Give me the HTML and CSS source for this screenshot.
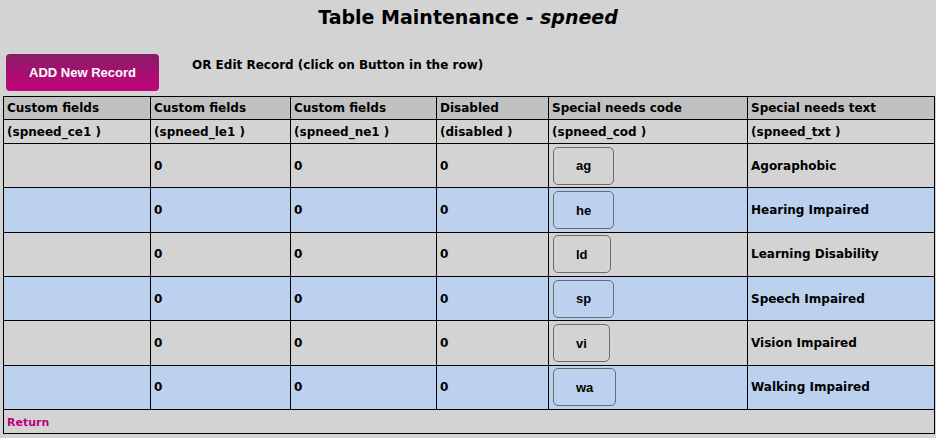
FILE: index.html
```html
<!DOCTYPE html>
<html>
<head>
<meta charset="utf-8">
<title>Table Maintenance - spneed</title>
<link rel="stylesheet" href="styles.css">
</head>
<body>
<h1 class="title">Table Maintenance - <i>spneed</i></h1>
<div class="toolbar">
  <button class="add-btn">ADD New Record</button>
  <span class="hint">OR Edit Record (click on Button in the row)</span>
</div>
<table class="grid">
  <colgroup>
    <col class="c1"><col class="c2"><col class="c3"><col class="c4"><col class="c5"><col class="c6">
  </colgroup>
  <thead>
    <tr class="head">
      <th>Custom fields</th><th>Custom fields</th><th>Custom fields</th><th>Disabled</th><th>Special needs code</th><th>Special needs text</th>
    </tr>
    <tr class="sub">
      <th>(spneed_ce1 )</th><th>(spneed_le1 )</th><th>(spneed_ne1 )</th><th>(disabled )</th><th>(spneed_cod )</th><th>(spneed_txt )</th>
    </tr>
  </thead>
  <tbody>
    <tr class="row odd"><td></td><td>0</td><td>0</td><td>0</td><td><button class="code-btn">ag</button></td><td>Agoraphobic</td></tr>
    <tr class="row even"><td></td><td>0</td><td>0</td><td>0</td><td><button class="code-btn">he</button></td><td>Hearing Impaired</td></tr>
    <tr class="row odd"><td></td><td>0</td><td>0</td><td>0</td><td><button class="code-btn">ld</button></td><td>Learning Disability</td></tr>
    <tr class="row even"><td></td><td>0</td><td>0</td><td>0</td><td><button class="code-btn">sp</button></td><td>Speech Impaired</td></tr>
    <tr class="row odd"><td></td><td>0</td><td>0</td><td>0</td><td><button class="code-btn">vi</button></td><td>Vision Impaired</td></tr>
    <tr class="row even"><td></td><td>0</td><td>0</td><td>0</td><td><button class="code-btn">wa</button></td><td>Walking Impaired</td></tr>
    <tr class="foot"><td colspan="6"><a class="return" href="#">Return</a></td></tr>
  </tbody>
</table>
</body>
</html>
```
FILE: styles.css
```css
html, body {
  margin: 0;
  padding: 0;
  background: #d3d3d3;
  font-family: "DejaVu Sans", "Liberation Sans", sans-serif;
  color: #000;
}
.title {
  margin: 0;
  padding-top: 4px;
  height: 36px;
  line-height: 26px;
  font-size: 19px;
  font-weight: bold;
  text-align: center;
}
.title i {
  font-style: italic;
}
.toolbar {
  display: flex;
  align-items: flex-start;
  gap: 33px;
  padding: 14px 0 0 6px;
}
.add-btn {
  width: 153px;
  height: 37px;
  border: none;
  border-radius: 4px;
  background: linear-gradient(to bottom, #8a1c66, #c3037b);
  color: #fff;
  font-family: "Liberation Sans", Arial, sans-serif;
  font-weight: bold;
  font-size: 13px;
  padding: 0;
}
.hint {
  font-size: 12px;
  font-weight: bold;
  padding-top: 4px;
  line-height: 14px;
}
.grid {
  margin: 5px 0 0 3px;
  border-collapse: collapse;
  table-layout: fixed;
  width: 931px;
  font-size: 12px;
  font-weight: bold;
}
.c1 { width: 147px; }
.c2 { width: 140px; }
.c3 { width: 146px; }
.c4 { width: 112px; }
.c5 { width: 199px; }
.c6 { width: 187px; }
.grid th, .grid td {
  border: 1px solid #000;
  padding: 0 3px;
  text-align: left;
  vertical-align: middle;
  white-space: nowrap;
  overflow: hidden;
}
.head th {
  background: #c1c1c1;
  height: 22px;
}
.sub th {
  background: #d3d3d3;
  height: 23px;
}
.row td {
  height: 43.35px;
  padding-top: 0;
  padding-bottom: 0;
}
.odd td { background: #d3d3d3; }
.even td { background: #bcd1ee; }
.code-btn {
  margin-left: 1px;
  height: 38px;
  padding: 0 22px;
  border: 1px solid #6c6c6c;
  border-radius: 5px;
  background: transparent;
  font-family: "Liberation Sans", Arial, sans-serif;
  font-size: 13px;
  font-weight: bold;
  color: #000;
  display: block;
}
.foot td {
  height: 23px;
  background: #d3d3d3;
}
.return {
  color: #c0007a;
  text-decoration: none;
  font-size: 11px;
  font-weight: bold;
}
```
